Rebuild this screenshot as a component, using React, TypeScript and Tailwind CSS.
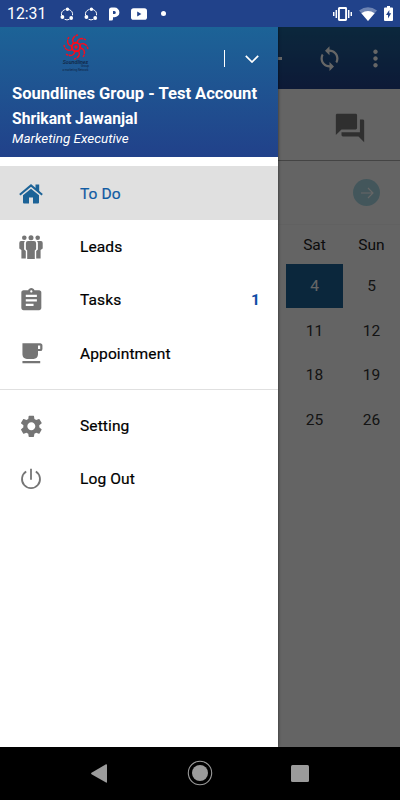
import type { ReactNode } from 'react';
import {
  MdAssignment,
  MdForum,
  MdLocalCafe,
  MdMoreVert,
  MdSettings,
  MdSync,
} from 'react-icons/md';

const weeks = [
  [4, 5],
  [11, 12],
  [18, 19],
  [25, 26],
];

function ShareIcon() {
  return (
    <svg viewBox="0 0 14 14" className="h-[14px] w-[14px]" fill="none" stroke="white">
      <path d="M4.8 2.6A5.300 5.300 0 0 0 1.500 8.300M9.2 2.6A5.300 5.300 0 0 1 12.500 8.300M4.600 12.300a5.300 5.300 0 0 0 4.800 0" strokeWidth="1" />
      <g fill="white" stroke="none">
        <circle cx="7.4" cy="2.2" r="1.8" />
        <circle cx="2.4" cy="10" r="1.9" />
        <circle cx="11.2" cy="11" r="1.9" />
      </g>
    </svg>
  );
}

function StatusBar() {
  return (
    <div className="flex h-[27px] items-center bg-[#21428a] pl-[7px] pr-[7px] text-white">
      <span className="w-[53px] text-[15.8px] leading-none">12:31</span>
      <ShareIcon />
      <span className="w-[10px]" />
      <ShareIcon />
      <svg viewBox="0 0 12 14" className="ml-[10px] h-[14px] w-[12px]" fill="white">
        <path
          fillRule="evenodd"
          d="M1 13.5V3Q1 .5 3.500 .5H6.500A4.900 4.900 0 0 1 6.500 10.300H5V12Q5 13.500 3.500 13.500zM5 4V7H6.300A1.500 1.500 0 0 0 6.300 4z"
        />
      </svg>
      <svg viewBox="0 0 16 12" className="ml-[11px] h-[12px] w-[16px]">
        <rect width="16" height="11.6" y=".2" rx="2.6" fill="white" />
        <path d="M6.2 3.6v5L10.4 6z" fill="#21428a" />
      </svg>
      <span className="ml-[14px] h-[5px] w-[5px] rounded-full bg-white" />
      <span className="flex-1" />
      <svg viewBox="0 0 19 14" className="h-[14px] w-[19px]" fill="none" stroke="white">
        <rect x="5.9" y="1" width="7.2" height="12" rx=".5" strokeWidth="1.9" />
        <path d="M3.3 3v8M.7 5v4M15.7 3v8M18.3 5v4" strokeWidth="1.5" />
      </svg>
      <svg viewBox="0 0 18 14" className="ml-[7px] h-[14px] w-[18px]">
        <path d="M0 3.6Q9-3.2 18 3.6L9 14z" fill="white" opacity=".35" />
        <path d="M2.4 6.3Q9 1.7 15.6 6.3L9 14z" fill="white" />
      </svg>
      <svg viewBox="0 0 9 15" className="ml-[7px] h-[15px] w-[9px]">
        <path d="M3 0h3v1.5h2q1 0 1 1V14q0 1-1 1H1q-1 0-1-1V2.500q0-1 1-1h2z" fill="white" />
        <path d="M5.3 4L2 9h2v3.500L7.200 7.300H5.300z" fill="#21428a" />
      </svg>
    </div>
  );
}

function CalendarPage() {
  return (
    <div className="h-full bg-[#fafafa]">
      <div className="flex h-[62px] items-center justify-end bg-linear-to-b from-[#1c6397] to-[#21418a] text-white">
        <span className="mr-[34px] h-[3px] w-[16px] bg-white" />
        <MdSync className="h-[27px] w-[27px]" />
        <MdMoreVert className="ml-[19px] mr-[11px] h-[27px] w-[27px]" />
      </div>
      <div className="flex h-[72px] items-center justify-end border-b border-[#aaa] pr-[33px] text-[#757575]">
        <MdForum className="mt-[6px] h-[34px] w-[34px]" />
      </div>
      <div className="flex h-[63px] items-center justify-end pr-[20px]">
        <div className="flex h-[27px] w-[27px] items-center justify-center rounded-full bg-[#a8d8e4]">
          <svg viewBox="0 0 14 12" className="h-[12px] w-[14px]" fill="none" stroke="white" strokeWidth="1.1">
            <path d="M1 6h12M8 1l5 5-5 5" />
          </svg>
        </div>
      </div>
      <div className="flex h-[39px] items-center justify-end border-t border-[#f2f2f2] pt-[3px] text-[15.5px] text-[#222]">
        <span className="w-[57px] text-center">Sat</span>
        <span className="w-[57px] text-center">Sun</span>
      </div>
      <div className="pt-[0.5px]">
        {weeks.map((days) => (
          <div key={days[0]} className="flex h-[44.44px] justify-end text-[15.5px] text-[#333]">
            {days.map((day) => (
              <span
                key={day}
                className={`flex w-[57px] items-center justify-center pt-[2.5px] ${day === 4 ? 'bg-[#1c6397] text-white' : ''}`}
              >
                {day}
              </span>
            ))}
          </div>
        ))}
      </div>
    </div>
  );
}

function Logo() {
  return (
    <div className="flex w-[27px] flex-col items-center">
      <svg viewBox="-12 -12 24 24" className="h-[24px] w-[24px] overflow-visible" fill="none" stroke="#fa0a1c">
        <circle r="4.2" strokeWidth="2" />
        <circle r="1.7" fill="#fa0a1c" stroke="none" />
        {[0, 45, 90, 135, 180, 225, 270, 315].map((angle) => (
          <path
            key={angle}
            d="M-2.500 -4C-4.500 -7 -3 -11 2 -12"
            transform={`rotate(${angle})`}
            strokeWidth="1.4"
            strokeDasharray="8 .7"
          />
        ))}
      </svg>
      <span className="mt-px text-[5.3px] font-medium italic leading-[5px] text-[#10233f]">Soundlines</span>
      <span className="self-end text-[3px] leading-[3px] text-[#10233f]">Group</span>
      <span className="mt-px whitespace-nowrap text-[2.8px] leading-[3px] text-[#10233f]">a marketing Network</span>
    </div>
  );
}

function DrawerHeader() {
  return (
    <div className="h-[130px] bg-linear-to-b from-[#1c6397] to-[#21418a] pl-[12px] text-white">
      <div className="flex h-[55px]">
        <div className="ml-[50px] mt-[8px]">
          <Logo />
        </div>
        <span className="ml-auto mt-[23px] h-[17px] w-[1.3px] bg-white" />
        <svg viewBox="0 0 14 8" className="ml-[20px] mr-[19px] mt-[28px] h-[8px] w-[14px]" fill="none" stroke="white" strokeWidth="1.7">
          <path d="M.8.8L7 7 13.200.8" />
        </svg>
      </div>
      <p className="whitespace-nowrap text-[16.57px] font-bold leading-[23px]">Soundlines Group - Test Account</p>
      <p className="mt-[2px] text-[15.7px] font-bold leading-[23px]">Shrikant Jawanjal</p>
      <p className="text-[13.45px] italic leading-[17px]">Marketing Executive</p>
    </div>
  );
}

function HouseIcon() {
  return (
    <svg viewBox="0 0 24 20" className="h-[20px] w-[24px]" fill="currentColor">
      <path d="M16.500.5h3.700v8l-3.700-3z" />
      <path d="M12 4.700L20 11.300V18.500q0 1-1 1H14V13.500h-4v6H5q-1 0-1-1V11.300z" />
      <path d="M.8 10.700L12 1.400l11.200 9.300" fill="none" stroke="currentColor" strokeWidth="2" />
    </svg>
  );
}

function PeopleIcon() {
  return (
    <svg viewBox="0 0 24 24" className="h-[24px] w-[24px]" fill="currentColor">
      <circle cx="5.300" cy="2.700" r="2.300" />
      <circle cx="12" cy="2.700" r="2.500" />
      <circle cx="18.700" cy="2.700" r="2.300" />
      <path d="M2 6h4q-.9.800-.9 2v6.500l1.700 1.500V23.500H2.400V15L.3 13.500V8Q.3 6 2 6z" />
      <path d="M22 6h-4q.9.800.9 2v6.500l-1.700 1.500V23.500h4.400V15l2.100-1.500V8Q23.700 6 22 6z" />
      <path d="M9 6h6q2.100 0 2.100 2.200v6L15.800 15.500V24H8.200V15.500L6.900 14.200v-6Q6.900 6 9 6z" />
    </svg>
  );
}

function PowerIcon() {
  return (
    <svg viewBox="0 0 22 22" className="h-[22px] w-[22px]" fill="none" stroke="currentColor" strokeWidth="1.8">
      <path d="M11 .8v11M6.200 3.500a9 9 0 1 0 9.600 0" />
    </svg>
  );
}

type MenuItemProps = {
  icon: ReactNode;
  label: string;
  count?: number;
  active?: boolean;
};

function MenuItem({ icon, label, count, active }: MenuItemProps) {
  return (
    <div className={`flex h-[53.33px] items-center pr-[18px] pt-[1.5px] text-[15.56px] tracking-[0.1px] ${active ? 'bg-[#e0e0e0] text-[#115ba3]' : 'text-black'}`}>
      <span className={`flex w-[62px] justify-center ${active ? 'text-[#1c6397]' : 'text-[#757575]'}`}>{icon}</span>
      <span className="ml-[18px] flex-1 pt-px [-webkit-text-stroke:0.2px_currentColor]">{label}</span>
      {count && <span className="pt-px font-bold text-[#0d4ba5]">{count}</span>}
    </div>
  );
}

function Drawer() {
  return (
    <aside className="absolute inset-y-0 left-0 w-[278px] bg-white shadow-[0_0_3px_rgba(0,0,0,0.6)]">
      <DrawerHeader />
      <nav className="pt-[9.4px]">
        <MenuItem icon={<HouseIcon />} label="To Do" active />
        <MenuItem icon={<PeopleIcon />} label="Leads" />
        <MenuItem icon={<MdAssignment className="h-[26.67px] w-[26.67px]" />} label="Tasks" count={1} />
        <MenuItem icon={<MdLocalCafe className="h-[26.67px] w-[26.67px]" />} label="Appointment" />
        <div className="mb-[8.4px] mt-[9px] h-[1.5px] bg-[#e0e0e0]" />
        <MenuItem icon={<MdSettings className="h-[26.67px] w-[26.67px]" />} label="Setting" />
        <MenuItem icon={<PowerIcon />} label="Log Out" />
      </nav>
    </aside>
  );
}

function NavigationBar() {
  return (
    <div className="flex h-[53px] items-center bg-black pb-px">
      <svg viewBox="0 0 16 19" className="ml-[91px] h-[19px] w-[16px]" fill="#9b9b9b">
        <path d="M15 .2Q16 0 16 1v17q0 1-1 .6L.5 10.200q-.8-.7 0-1.400z" />
      </svg>
      <svg viewBox="0 0 26 26" className="ml-[80px] h-[26px] w-[26px]">
        <circle cx="13" cy="13" r="11.700" fill="none" stroke="#9b9b9b" strokeWidth="1.100" />
        <circle cx="13" cy="13" r="8" fill="#9b9b9b" />
      </svg>
      <span className="ml-[78px] h-[17px] w-[18px] rounded-[1.5px] bg-[#9b9b9b]" />
    </div>
  );
}

export default function App() {
  return (
    <div className="flex h-[800px] w-[400px] flex-col overflow-hidden font-['Roboto',sans-serif]">
      <StatusBar />
      <main className="relative flex-1 overflow-hidden">
        <CalendarPage />
        <div className="absolute inset-0 bg-black/60" />
        <Drawer />
      </main>
      <NavigationBar />
    </div>
  );
}
